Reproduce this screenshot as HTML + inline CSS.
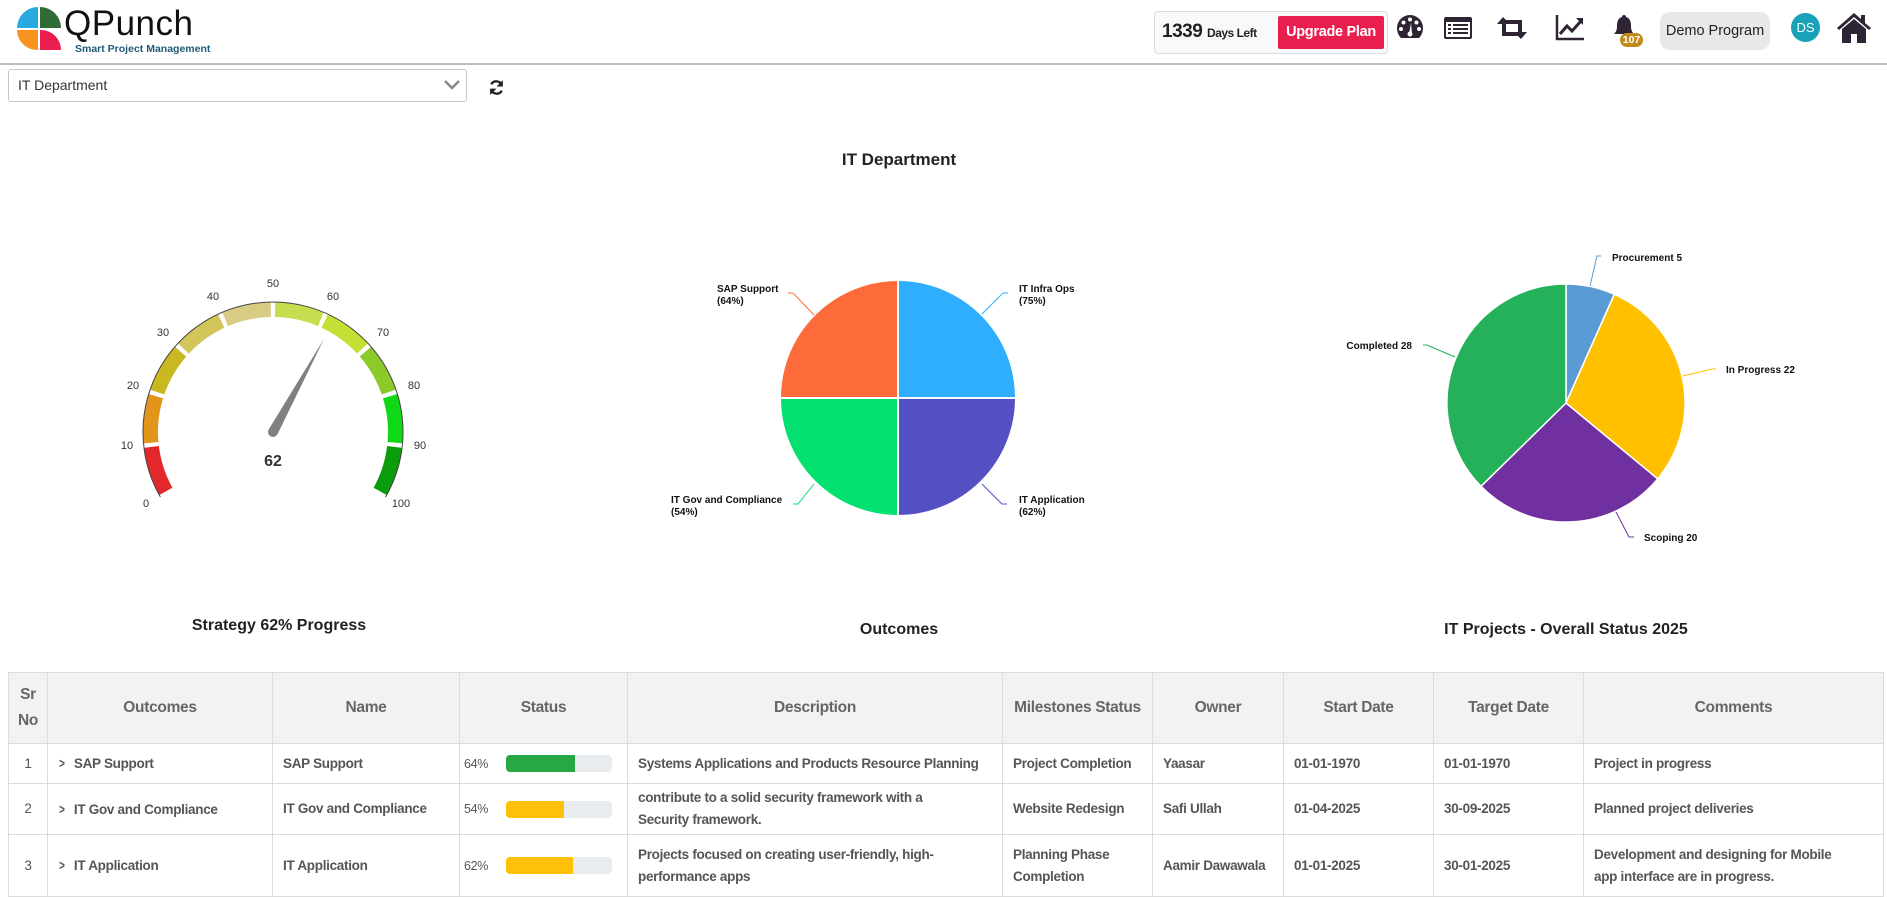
<!DOCTYPE html>
<html><head><meta charset="utf-8">
<style>
*{box-sizing:border-box;margin:0;padding:0}
body{width:1887px;height:886px;overflow:hidden;background:#fff;font-family:"Liberation Sans",sans-serif;position:relative;color:#333}
.abs{position:absolute}
.hdr{position:absolute;left:0;top:0;width:1887px;height:65px;border-bottom:2px solid #bdbdbd}
table{position:absolute;left:8px;top:672px;border-collapse:collapse;table-layout:fixed;width:1875px}
th,td{border:1px solid #dcdcdc;white-space:nowrap}
th{background:#f2f2f2;color:#666;font-size:15.5px;font-weight:bold;height:71px;text-align:center;letter-spacing:-0.3px}
td{color:#555;font-size:13.5px;font-weight:bold;letter-spacing:-0.3px;padding:0 10px;line-height:22px}
td.c{text-align:center;padding:0;font-weight:normal}
.bar{display:inline-block;width:106px;height:17px;background:#e9ecef;border-radius:4px;vertical-align:middle;overflow:hidden;margin-left:14px}
.bar i{display:block;height:100%}
.pct{font-weight:normal;font-size:12.5px;display:inline-block;width:28px}
.chev{display:inline-block;margin-right:8px;color:#555;font-size:14px;font-weight:bold;transform:scaleX(.7)}
</style></head><body>
<div class="hdr"></div>
<!-- logo -->
<div class="abs" style="left:17px;top:7px;width:21px;height:21px;background:#29abe2;border-radius:21px 0 0 0"></div>
<div class="abs" style="left:40px;top:7px;width:21px;height:21px;background:#2e6b35;border-radius:0 21px 0 0"></div>
<div class="abs" style="left:17px;top:30px;width:21px;height:20px;background:#f7931e;border-radius:0 0 0 21px"></div>
<div class="abs" style="left:40px;top:30px;width:21px;height:20px;background:#e91e4f;border-radius:0 21px 0 0"></div>
<div class="abs" style="left:64px;top:4px;font-size:35px;color:#111;letter-spacing:0.5px;line-height:40px">QPunch</div>
<div class="abs" style="left:75px;top:43px;font-size:10.5px;font-weight:bold;color:#1f5a78">Smart Project Management</div>

<!-- days box -->
<div class="abs" style="left:1154px;top:11px;width:234px;height:43px;background:#f8f9fa;border:1px solid #dcdcdc;border-radius:4px"></div>
<div class="abs" style="left:1162px;top:21px;font-size:19px;font-weight:bold;color:#222;letter-spacing:-0.5px">1339 <span style="font-size:12px">Days Left</span></div>
<div class="abs" style="left:1278px;top:16px;width:106px;height:33px;background:#e91e4f;border-radius:2px;color:#fff;font-weight:bold;font-size:14.5px;line-height:33px;text-align:center;letter-spacing:-0.3px">Upgrade Plan</div>

<!-- nav icons -->
<svg class="abs" style="left:1396px;top:14px" width="28" height="26" viewBox="0 0 28 26"><path d="M14 1A13 13 0 0 0 1 14c0 4 1.5 7.5 4 10h18c2.5-2.5 4-6 4-10A13 13 0 0 0 14 1z" fill="#2f2433"/><circle cx="14" cy="5.5" r="2" fill="#fff"/><circle cx="7.5" cy="8.5" r="2" fill="#fff"/><circle cx="20.5" cy="8.5" r="2" fill="#fff"/><circle cx="5" cy="15" r="2" fill="#fff"/><circle cx="23" cy="15" r="2" fill="#fff"/><path d="M13 20l2-11 1 11z" fill="#fff"/><circle cx="14" cy="20" r="2.5" fill="#fff"/></svg>
<svg class="abs" style="left:1443px;top:16px" width="30" height="24" viewBox="0 0 30 24"><rect x="1" y="1" width="28" height="22" rx="2" fill="#2f2433"/><rect x="3" y="6" width="24" height="15" fill="#fff"/><g fill="#2f2433"><rect x="5" y="8" width="3" height="2"/><rect x="10" y="8" width="15" height="2"/><rect x="5" y="12" width="3" height="2"/><rect x="10" y="12" width="15" height="2"/><rect x="5" y="16" width="3" height="2"/><rect x="10" y="16" width="15" height="2"/></g></svg>
<svg class="abs" style="left:1496px;top:16px" width="32" height="24" viewBox="0 0 32 24"><path d="M7 1l7 7h-4v8h10l4 4H6V8H1z" fill="#2f2433"/><path d="M25 23l-7-7h4V8H12L8 4h18v12h5z" fill="#2f2433"/></svg>
<svg class="abs" style="left:1555px;top:13px" width="30" height="28" viewBox="0 0 30 28"><path d="M2 2v24h27" stroke="#2f2433" stroke-width="2.5" fill="none"/><path d="M5 21l7-8 5 5 9-10" stroke="#2f2433" stroke-width="3" fill="none"/><path d="M21 5h7v7z" fill="#2f2433"/></svg>
<svg class="abs" style="left:1612px;top:14px" width="24" height="26" viewBox="0 0 24 26"><path d="M12 1c-1.5 0-2 1-2 2C6 4 5 8 5 12c0 4-1 6-3 8h20c-2-2-3-4-3-8 0-4-1-8-5-9 0-1-.5-2-2-2z" fill="#2f2433"/><path d="M9 22a3 3 0 0 0 6 0z" fill="#2f2433"/></svg>
<div class="abs" style="left:1620px;top:33px;width:23px;height:14px;background:#c28a1b;border-radius:7px;color:#fff;font-size:10.5px;font-weight:bold;line-height:14px;text-align:center">107</div>
<div class="abs" style="left:1660px;top:12px;width:110px;height:38px;background:#e8e8e6;border-radius:10px;font-size:14.5px;line-height:38px;text-align:center;color:#222">Demo Program</div>
<div class="abs" style="left:1791px;top:13px;width:29px;height:29px;background:#17a2b8;border-radius:50%;color:#fff;font-size:13px;line-height:29px;text-align:center">DS</div>
<svg class="abs" style="left:1836px;top:12px" width="36" height="32" viewBox="0 0 36 32"><path d="M18 1L1 16l2 2 15-13 15 13 2-2-6-5V3h-4v4z" fill="#2f2433"/><path d="M6 17l12-10 12 10v14h-9v-9h-6v9H6z" fill="#2f2433"/></svg>

<!-- select -->
<div class="abs" style="left:8px;top:69px;width:459px;height:33px;border:1px solid #c8c8c8;border-radius:3px;font-size:14px;line-height:31px;padding-left:9px;color:#333">IT Department</div>
<svg class="abs" style="left:444px;top:80px" width="16" height="10" viewBox="0 0 16 10"><path d="M1 1l7 7 7-7" stroke="#888" stroke-width="2.5" fill="none"/></svg>
<svg class="abs" style="left:488px;top:79px" width="17" height="17" viewBox="0 0 16 16"><path d="M13 6A5.5 5.5 0 0 0 3 5M3 10a5.5 5.5 0 0 0 10 1" stroke="#222" stroke-width="2.2" fill="none"/><path d="M14 1v6H8z M2 15V9h6z" fill="#222"/></svg>

<div class="abs" style="left:0;width:1798px;top:150px;text-align:center;font-size:17px;font-weight:bold;color:#222">IT Department</div>

<svg class="abs" style="left:0;top:0" width="1887" height="670">
<g fill="none" stroke-width="15">
<g transform="rotate(-209 273 432)">
<circle cx="273" cy="432" r="122.5" stroke="#e3282b" stroke-dasharray="47 800"/>
<circle cx="273" cy="432" r="122.5" stroke="#e3941a" stroke-dasharray="47 800" transform="rotate(24 273 432)"/>
<circle cx="273" cy="432" r="122.5" stroke="#c9b820" stroke-dasharray="47 800" transform="rotate(48 273 432)"/>
<circle cx="273" cy="432" r="122.5" stroke="#d2c55a" stroke-dasharray="47 800" transform="rotate(72 273 432)"/>
<circle cx="273" cy="432" r="122.5" stroke="#d8cc85" stroke-dasharray="47 800" transform="rotate(96 273 432)"/>
<circle cx="273" cy="432" r="122.5" stroke="#c7dc4e" stroke-dasharray="47 800" transform="rotate(120 273 432)"/>
<circle cx="273" cy="432" r="122.5" stroke="#c5e034" stroke-dasharray="47 800" transform="rotate(144 273 432)"/>
<circle cx="273" cy="432" r="122.5" stroke="#8cc92a" stroke-dasharray="47 800" transform="rotate(168 273 432)"/>
<circle cx="273" cy="432" r="122.5" stroke="#10d816" stroke-dasharray="47 800" transform="rotate(192 273 432)"/>
<circle cx="273" cy="432" r="122.5" stroke="#0a9c0a" stroke-dasharray="47 800" transform="rotate(216 273 432)"/>
</g>
<circle cx="273" cy="432" r="130" stroke="#444" stroke-width="1" stroke-dasharray="544.5 900" transform="rotate(-210 273 432)"/>
</g>
<g font-size="11" fill="#333" text-anchor="middle" dominant-baseline="middle" font-family="Liberation Sans">
<text x="146" y="504">0</text><text x="127" y="446">10</text><text x="133" y="386">20</text><text x="163" y="333">30</text><text x="213" y="297">40</text><text x="273" y="284">50</text><text x="333" y="297">60</text><text x="383" y="333">70</text><text x="414" y="386">80</text><text x="420" y="446">90</text><text x="401" y="504">100</text>
</g>
<polygon points="324,339 277.4,434.4 268.6,429.6" fill="#808080"/>
<circle cx="273" cy="432" r="5" fill="#808080"/>
<text x="273" y="466" text-anchor="middle" font-size="16" font-weight="bold" fill="#333" font-family="Liberation Sans">62</text>

<!-- pie 1 -->
<g stroke="#fff" stroke-width="2">
<path d="M898 398V280A118 118 0 0 1 1016 398z" fill="#2eaefc"/>
<path d="M898 398H1016A118 118 0 0 1 898 516z" fill="#5450c4"/>
<path d="M898 398V516A118 118 0 0 1 780 398z" fill="#02e070"/>
<path d="M898 398H780A118 118 0 0 1 898 280z" fill="#fd6b3a"/>
</g>
<g fill="none" stroke-width="1">
<path d="M788 293h5l21 22" stroke="#fd6b3a"/>
<path d="M1008 293h-5l-21 21" stroke="#2eaefc"/>
<path d="M793 504h5l16-20" stroke="#02e070"/>
<path d="M1007 504h-5l-20-20" stroke="#5450c4"/>
</g>
<g font-size="10" font-weight="bold" fill="#111" font-family="Liberation Sans">
<text x="717" y="292">SAP Support</text><text x="717" y="304">(64%)</text>
<text x="1019" y="292">IT Infra Ops</text><text x="1019" y="304">(75%)</text>
<text x="671" y="503">IT Gov and Compliance</text><text x="671" y="515">(54%)</text>
<text x="1019" y="503">IT Application</text><text x="1019" y="515">(62%)</text>
</g>

<!-- pie 2 -->
<g stroke="#fff" stroke-width="1.5">
<path d="M1566 403V284A119 119 0 0 1 1614.4 294.3z" fill="#5b9bd5"/>
<path d="M1566 403L1614.4 294.3A119 119 0 0 1 1657.7 478.9z" fill="#ffc000"/>
<path d="M1566 403L1657.7 478.9A119 119 0 0 1 1481 486.3z" fill="#7030a0"/>
<path d="M1566 403L1481 486.3A119 119 0 0 1 1566 284z" fill="#25b05a"/>
</g>
<g fill="none" stroke-width="1">
<path d="M1601 256h-4l-7 30" stroke="#5b9bd5"/>
<path d="M1423 345h4l28 12" stroke="#25b05a"/>
<path d="M1716 369h-4l-29 7" stroke="#ffc000"/>
<path d="M1634 537h-5l-13-25" stroke="#7030a0"/>
</g>
<g font-size="10" font-weight="bold" fill="#111" font-family="Liberation Sans">
<text x="1612" y="261">Procurement 5</text>
<text x="1412" y="349" text-anchor="end">Completed 28</text>
<text x="1726" y="373">In Progress 22</text>
<text x="1644" y="541">Scoping 20</text>
</g>
<g font-size="16" font-weight="bold" fill="#222" text-anchor="middle" font-family="Liberation Sans">
<text x="279" y="630">Strategy 62% Progress</text>
<text x="899" y="634">Outcomes</text>
<text x="1566" y="634">IT Projects - Overall Status 2025</text>
</g>
</svg>

<table>
<colgroup><col style="width:39px"><col style="width:225px"><col style="width:187px"><col style="width:168px"><col style="width:375px"><col style="width:150px"><col style="width:131px"><col style="width:150px"><col style="width:150px"><col style="width:300px"></colgroup>
<tr><th style="line-height:26px">Sr<br>No</th><th>Outcomes</th><th>Name</th><th>Status</th><th>Description</th><th>Milestones Status</th><th>Owner</th><th>Start Date</th><th>Target Date</th><th>Comments</th></tr>
<tr style="height:40px"><td class="c">1</td><td><span class="chev">&gt;</span>SAP Support</td><td>SAP Support</td><td style="padding-left:4px"><span class="pct">64%</span><span class="bar"><i style="width:65%;background:#28a745"></i></span></td><td>Systems Applications and Products Resource Planning</td><td>Project Completion</td><td>Yaasar</td><td>01-01-1970</td><td>01-01-1970</td><td>Project in progress</td></tr>
<tr style="height:51px"><td class="c">2</td><td><span class="chev">&gt;</span>IT Gov and Compliance</td><td>IT Gov and Compliance</td><td style="padding-left:4px"><span class="pct">54%</span><span class="bar"><i style="width:55%;background:#ffc107"></i></span></td><td>contribute to a solid security framework with a<br>Security framework.</td><td>Website Redesign</td><td>Safi Ullah</td><td>01-04-2025</td><td>30-09-2025</td><td>Planned project deliveries</td></tr>
<tr style="height:62px"><td class="c">3</td><td><span class="chev">&gt;</span>IT Application</td><td>IT Application</td><td style="padding-left:4px"><span class="pct">62%</span><span class="bar"><i style="width:63%;background:#ffc107"></i></span></td><td>Projects focused on creating user-friendly, high-<br>performance apps</td><td>Planning Phase<br>Completion</td><td>Aamir Dawawala</td><td>01-01-2025</td><td>30-01-2025</td><td>Development and designing for Mobile<br>app interface are in progress.</td></tr>
</table>
</body></html>
